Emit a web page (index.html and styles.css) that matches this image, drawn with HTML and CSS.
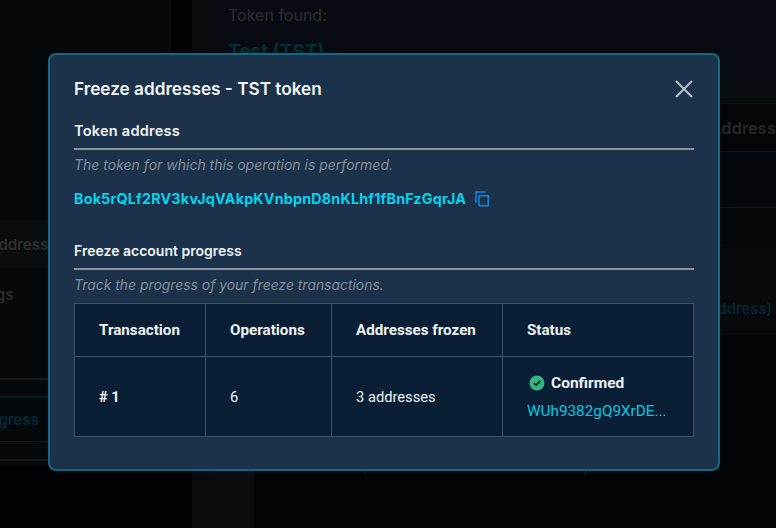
FILE: index.html
```html
<!DOCTYPE html>
<html lang="en">
<head>
<meta charset="utf-8">
<title>Freeze addresses</title>
<link rel="stylesheet" href="styles.css">
</head>
<body>
<div class="app">
  <aside class="sidebar">
    <div class="nav-row nav-active"><span class="nav-text">Token address</span></div>
    <div class="nav-row nav-plain"><span class="nav-text nav-short">Settings</span></div>
    <div class="nav-foot">
      <div class="nav-button"><span class="nav-button-text">Progress</span></div>
    </div>
  </aside>
  <div class="gutter"></div>
  <main class="main">
    <div class="found">
      <p class="found-label">Token found:</p>
      <h2 class="found-name">Test (TST)</h2>
    </div>
    <div class="band-head"></div>
    <div class="row-a"><span class="row-text">Address</span></div>
    <div class="row-b"></div>
    <div class="row-c"></div>
    <div class="row-d"><span class="row-link">(address)</span></div>
    <div class="foot">
      <p class="foot-note">Confirm the requests to freeze addresses already frozen</p>
    </div>
  </main>
</div>

<div class="overlay">
  <section class="modal">
    <header class="modal-head">
      <h1 class="modal-title">Freeze addresses - TST token</h1>
      <svg class="close" viewBox="0 0 18 18" aria-label="Close"><path d="M1 1L17 17M17 1L1 17"/></svg>
    </header>

    <h3 class="section-title section-title-wide">Token address</h3>
    <p class="section-desc">The token for which this operation is performed.</p>
    <div class="address-row">
      <span class="address">Bok5rQLf2RV3kvJqVAkpKVnbpnD8nKLhf1fBnFzGqrJA</span>
      <svg class="copy" viewBox="0 0 15 16"><path d="M4 4.75H13.25V14.75H4.75A.75.75 0 0 1 4 14V4.75Z"/><path d="M1 11.5V1H10.5"/></svg>
    </div>

    <h3 class="section-title section-gap">Freeze account progress</h3>
    <p class="section-desc section-desc-tight">Track the progress of your freeze transactions.</p>

    <table class="tx-table">
      <colgroup>
        <col class="col-1"><col class="col-2"><col class="col-3"><col class="col-4">
      </colgroup>
      <thead>
        <tr><th>Transaction</th><th>Operations</th><th>Addresses frozen</th><th>Status</th></tr>
      </thead>
      <tbody>
        <tr>
          <td class="tx-id"># 1</td>
          <td>6</td>
          <td>3 addresses</td>
          <td>
            <div class="status">
              <svg class="check" viewBox="0 0 16 16"><circle cx="8" cy="8" r="7.5"/><path d="M4.8 8.2L7 10.3L11.2 6"/></svg>
              <span>Confirmed</span>
            </div>
            <div class="tx-hash">WUh9382gQ9XrDE...</div>
          </td>
        </tr>
      </tbody>
    </table>
  </section>
</div>
</body>
</html>
```
FILE: styles.css
```css
* { box-sizing: border-box; }
html, body { margin: 0; height: 100%; }
body {
  width: 776px;
  height: 528px;
  overflow: hidden;
  position: relative;
  background: #010204;
  font-family: "Inter", "Liberation Sans", sans-serif;
}
h1, h2, h3, p { margin: 0; }

.app { display: flex; height: 528px; }

.sidebar {
  width: 171px;
  height: 465px;
  flex: none;
  padding-top: 220px;
  background: #05090c;
  border-right: 3px solid #090d10;
  overflow: hidden;
  display: flex;
  flex-direction: column;
}
.nav-row { display: flex; align-items: center; font-size: 15px; font-weight: 600; color: #2d3033; white-space: nowrap; }
.nav-active { height: 48px; background: #090d10; }
.nav-plain { height: 50px; padding-top: 2px; }
.nav-text { margin-left: -58px; }
.nav-short { margin-left: -45px; font-weight: 500; }
.nav-foot {
  margin-top: 60px;
  height: 83px;
  border-top: 2px solid #17191c;
  border-bottom: 2px solid #15181b;
  padding-top: 16px;
}
.nav-button {
  height: 46px;
  border-top: 1px solid #05222f;
  border-bottom: 1px solid #05222f;
  display: flex;
  align-items: center;
  font-size: 15px;
  font-weight: 600;
  color: #052a36;
  white-space: nowrap;
}
.nav-button-text { margin-left: -26px; }

.gutter { width: 21px; flex: none; }

.main {
  flex: 1;
  min-width: 0;
  height: 528px;
  background: #020408;
  border-left: 24px solid #070b0e;
  display: flex;
  flex-direction: column;
  overflow: hidden;
}
.found { height: 79px; padding: 6px 0 0 12px; background: #080c12; overflow: hidden; }
.found-label { font-size: 16px; line-height: 18px; color: #2b2e31; }
.found-name { margin-top: 16px; font-size: 19px; line-height: 24px; font-weight: 700; color: #042e36; }
.band-head { height: 25px; background: #0a0d10; border-bottom: 1px solid #111417; }
.row-a {
  height: 48px;
  background: #030508;
  border-bottom: 1px solid #14171a;
  display: flex;
  align-items: center;
  justify-content: flex-end;
  padding: 1px 0 0;
  font-size: 16.5px;
  font-weight: 600;
  color: #25282b;
}
.row-b { height: 56px; background: #04070b; border-bottom: 1px solid #15181b; }
.row-c { height: 36px; background: #05080b; }
.row-d {
  height: 91px;
  background: #07090c;
  display: flex;
  align-items: center;
  justify-content: flex-end;
  padding-right: 4px;
  font-size: 15px;
  font-weight: 500;
  color: #042a31;
}
.row-link { margin-top: 38px; }
.foot {
  flex: 1;
  padding: 122px 0 0 47px;
  background: linear-gradient(90deg, #0a0d0f 38px, transparent 38px);
}
.foot-note { font-size: 14px; line-height: 18px; color: #25282b; white-space: nowrap; }

.overlay {
  position: absolute;
  inset: 0;
  display: flex;
  align-items: center;
  justify-content: center;
  padding: 0 8px 4px 0;
}
.modal {
  width: 672px;
  height: 418px;
  padding: 23px 24px 24px;
  background: #1b324a;
  border: 2px solid #136a80;
  border-radius: 8px;
}
.modal-head { display: flex; align-items: center; justify-content: space-between; height: 22px; margin-bottom: 22px; }
.modal-title { font-size: 17.2px; line-height: 22px; font-weight: 600; color: #f2f5f8; }
.close { width: 18px; height: 18px; margin-right: 1px; fill: none; stroke: #b6bfc9; stroke-width: 2; }

.section-title {
  font-size: 14px;
  line-height: 18px;
  font-weight: 600;
  color: #f0f3f6;
  padding-bottom: 8px;
  border-bottom: 2px solid #8b929f;
}
.section-title-wide { font-size: 14.6px; letter-spacing: 0.2px; }
.section-gap { margin-top: 33px; }
.section-desc { margin-top: 6px; font-size: 14px; line-height: 18px; font-style: italic; color: #838e9c; }
.section-desc-tight { font-size: 13.9px; }

.address-row { display: flex; align-items: center; gap: 9px; margin-top: 15px; height: 20px; }
.address { font-size: 14.3px; line-height: 20px; font-weight: 700; color: #06d3ef; white-space: nowrap; letter-spacing: 0.2px; }
.copy { width: 15px; height: 16px; fill: none; stroke: #1288e6; stroke-width: 1.5; }

.tx-table {
  width: 619px;
  margin-top: 9px;
  table-layout: fixed;
  border-collapse: collapse;
  background: #0a1f35;
  font-family: "Roboto", "Liberation Sans", sans-serif;
  font-size: 14.7px;
  color: #edf1f5;
}
.col-1 { width: 131px; }
.col-2 { width: 126px; }
.col-3 { width: 171px; }
.col-4 { width: 191px; }
.tx-table th, .tx-table td { border: 1px solid #3a526b; padding: 0 0 0 24px; text-align: left; }
.tx-table th { height: 53px; font-size: 15.2px; font-weight: 700; }
.tx-table td { height: 80px; font-weight: 400; }
.tx-table .tx-id { font-weight: 700; }
.status { display: flex; align-items: center; gap: 6px; font-size: 15.5px; font-weight: 700; padding-left: 2px; }
.check { width: 16px; height: 16px; }
.check circle { fill: #34b67f; }
.check path { fill: none; stroke: #0a1f35; stroke-width: 1.8; }
.tx-hash { margin-top: 10px; font-size: 15.3px; color: #06c8e4; white-space: nowrap; }
```
